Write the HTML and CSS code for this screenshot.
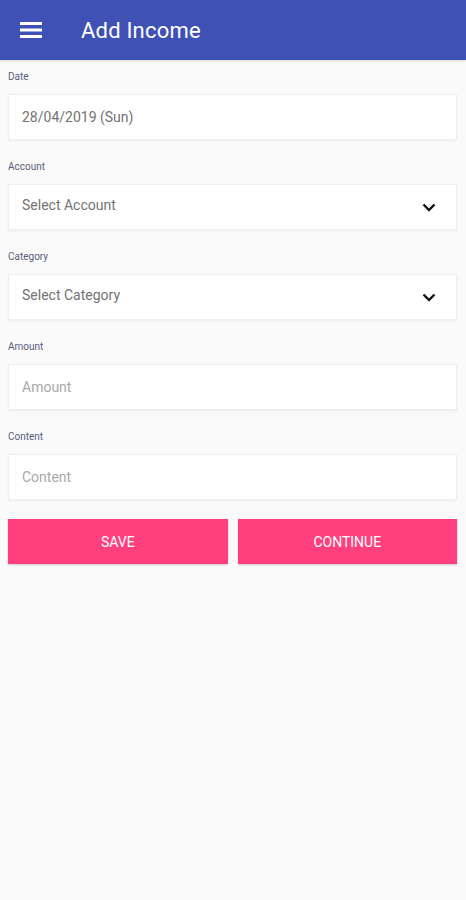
FILE: index.html
```html
<!DOCTYPE html>
<html>
<head>
<meta charset="utf-8">
<link rel="stylesheet" href="styles.css">
</head>
<body>
<header class="appbar">
  <svg class="menu" width="22" height="16" viewBox="0 0 22 16">
    <rect x="0" y="0" width="22" height="3" fill="#fff"/>
    <rect x="0" y="6.5" width="22" height="3" fill="#fff"/>
    <rect x="0" y="13" width="22" height="3" fill="#fff"/>
  </svg>
  <h1 class="title">Add Income</h1>
</header>
<main class="form">
  <div class="group">
    <div class="label">Date</div>
    <div class="field"><span class="value">28/04/2019 (Sun)</span></div>
  </div>
  <div class="group">
    <div class="label">Account</div>
    <div class="field select"><span class="value sel">Select Account</span>
      <svg class="chev" width="14" height="9" viewBox="0 0 14 9"><path d="M1.5 1.5 L7 7 L12.5 1.5" fill="none" stroke="#111" stroke-width="2.4"/></svg>
    </div>
  </div>
  <div class="group">
    <div class="label">Category</div>
    <div class="field select"><span class="value sel">Select Category</span>
      <svg class="chev" width="14" height="9" viewBox="0 0 14 9"><path d="M1.5 1.5 L7 7 L12.5 1.5" fill="none" stroke="#111" stroke-width="2.4"/></svg>
    </div>
  </div>
  <div class="group">
    <div class="label">Amount</div>
    <div class="field"><span class="placeholder">Amount</span></div>
  </div>
  <div class="group">
    <div class="label">Content</div>
    <div class="field"><span class="placeholder">Content</span></div>
  </div>
  <div class="buttons">
    <button class="btn">SAVE</button>
    <button class="btn">CONTINUE</button>
  </div>
</main>
</body>
</html>
```

FILE: styles.css
```css
* { box-sizing: border-box; }
html, body {
  margin: 0;
  padding: 0;
  background: #fafafa;
  font-family: Roboto, "Noto Sans", sans-serif;
  width: 466px;
  height: 900px;
}
.appbar {
  height: 60px;
  background: #3f51b5;
  display: flex;
  align-items: center;
  padding-left: 20px;
  box-shadow: 0 1px 2px rgba(0,0,0,0.15);
}
.menu { display: block; margin-top: 0; }
.title {
  margin: 0 0 0 39px;
  font-size: 22px;
  font-weight: 400;
  color: #fff;
  letter-spacing: 0.2px;
}
.form {
  padding: 9px 9px 0 8px;
  display: flex;
  flex-direction: column;
}
.group {
  display: flex;
  flex-direction: column;
  margin-bottom: 19px;
}
.label {
  font-size: 10px;
  line-height: 16px;
  height: 16px;
  color: #5a5a7e;
  margin-bottom: 9px;
}
.field {
  height: 46px;
  background: #fff;
  border: 1px solid #efefef;
  box-shadow: 0 1px 2px rgba(0,0,0,0.06);
  display: flex;
  align-items: center;
  padding: 0 20px 0 13px;
  font-size: 14px;
}
.select { justify-content: space-between; }
.chev { display: block; }
.value { color: #737373; }
.sel { padding-bottom: 4px; }
.placeholder { color: #a8a8a8; }
.buttons {
  display: flex;
  gap: 10px;
}
.btn {
  flex: 1;
  height: 45px;
  border: none;
  background: #ff3f7e;
  color: #fff;
  font-family: Roboto, "Noto Sans", sans-serif;
  font-size: 14px;
  box-shadow: 0 1px 2px rgba(0,0,0,0.2);
  padding: 0;
}
```
